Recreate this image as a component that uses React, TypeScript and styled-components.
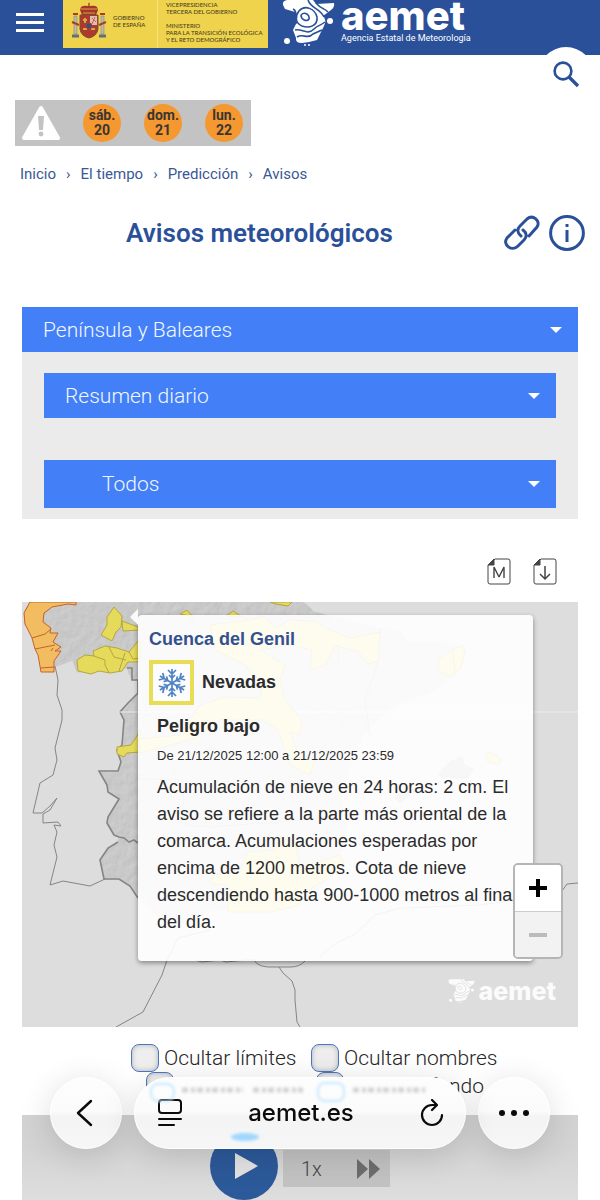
import React from "react";
import styled, { createGlobalStyle } from "styled-components";

const blue = "#2a5099";
const sans = '"Roboto", "Noto Sans", sans-serif';

const GlobalStyle = createGlobalStyle`
  *, *::before, *::after { box-sizing: border-box; }
  body { margin: 0; background: #fff; font-family: ${sans}; color: #222; }
  button, select, input { font: inherit; color: inherit; margin: 0; }
  button { border: 0; padding: 0; background: none; cursor: pointer; }
  a { color: inherit; text-decoration: none; }
  svg { display: block; }
`;

const Page = styled.div`
  position: relative;
  overflow: hidden;
`;

const Header = styled.header`
  position: relative;
  display: flex;
  align-items: flex-start;
  height: 55px;
  padding-left: 16px;
  background: ${blue};
`;

const MenuButton = styled.button`
  display: flex;
  flex-direction: column;
  gap: 5px;
  width: 28px;
  margin: 13px 19px 0 0;
`;

const MenuBar = styled.span`
  height: 3px;
  width: 100%;
  background: #fff;
`;

const Government = styled.a`
  display: flex;
  height: 48px;
  width: 205px;
  background: #efd34d;
  color: #4a4222;
  font: 500 6px/7px "Lato", sans-serif;
`;

const GovernmentName = styled.span`
  width: 44px;
  margin: 14px 0 0 6px;
`;

const Ministry = styled.span`
  flex: 1;
  padding: 1px 0 0 8px;
  border-left: 1px solid #f6e27c;
  white-space: nowrap;
`;

const MinistryLine = styled.span<{ $spaced?: boolean }>`
  display: block;
  margin-top: ${(p) => (p.$spaced ? 7 : 0)}px;
`;

const Brand = styled.a`
  display: flex;
  gap: 6px;
  margin-left: 14px;
  color: #fff;
`;

const BrandText = styled.span`
  display: flex;
  flex-direction: column;
`;

const Wordmark = styled.span<{ $size: number }>`
  font: 800 ${(p) => p.$size}px/${(p) => p.$size - 8}px "Inter", sans-serif;
`;

const Tagline = styled.span`
  font-size: 9px;
  line-height: 12px;
  white-space: nowrap;
`;

const SearchButton = styled.button`
  position: absolute;
  top: 47px;
  right: 6px;
  display: grid;
  place-items: center;
  width: 56px;
  height: 56px;
  border-radius: 50%;
  background: #fff;
`;

const Alerts = styled.section`
  display: flex;
  align-items: center;
  gap: 23px;
  width: 236px;
  height: 46px;
  margin: 45px 0 0 15px;
  padding-left: 7px;
  background: #c3c3c3;
`;

const AlertDay = styled.a`
  display: grid;
  place-content: center;
  width: 38px;
  height: 38px;
  border-radius: 50%;
  background: #f5982f;
  color: #3b3533;
  font-size: 14px;
  font-weight: 700;
  line-height: 15px;
  text-align: center;
`;

const Breadcrumb = styled.nav`
  display: flex;
  gap: 10px;
  margin: 18px 20px 0;
  color: #3a5895;
  font-size: 15px;
  line-height: 20px;
`;

const TitleRow = styled.div`
  display: flex;
  align-items: center;
  gap: 9px;
  height: 40px;
  margin: 29px 15px 0 24px;
`;

const Title = styled.h1`
  flex: 1;
  margin: 0;
  color: ${blue};
  font-size: 26px;
  font-weight: 600;
  line-height: 36px;
  text-align: center;
`;

const IconButton = styled.button`
  color: ${blue};
`;

const Filters = styled.section`
  margin: 54px 22px 0;
  padding-bottom: 11px;
  background: #ebebeb;
`;

const SubFilters = styled.div`
  display: flex;
  flex-direction: column;
  gap: 42px;
  padding: 21px 22px 0;
`;

const Picker = styled.label`
  position: relative;
  display: flex;
  align-items: center;
`;

const Select = styled.select<{ $height: number; $indent: number }>`
  appearance: none;
  width: 100%;
  height: ${(p) => p.$height}px;
  padding: 0 40px 0 ${(p) => p.$indent}px;
  border: 0;
  border-radius: 0;
  background: #437ff6;
  color: #f2f7ff;
  font-size: 21px;
  font-weight: 300;
`;

const Caret = styled.svg`
  position: absolute;
  right: 16px;
  pointer-events: none;
`;

const MapTools = styled.div`
  display: flex;
  justify-content: flex-end;
  gap: 22px;
  margin: 39px 43px 17px;
`;

const MapFrame = styled.section`
  position: relative;
  margin: 0 22px;
  background: #ddd;
`;

const MapDrawing = styled.svg`
  width: 100%;
  height: auto;
`;

const Popup = styled.article`
  position: absolute;
  top: 13px;
  left: 116px;
  right: 45px;
  height: 346px;
  padding: 10px 11px;
  border-radius: 4px;
  background: rgba(255, 255, 255, 0.9);
  box-shadow: 0 2px 5px rgba(0, 0, 0, 0.4);
  color: #2b2b2b;
  font-family: "Liberation Sans", sans-serif;

  &::before {
    content: "";
    position: absolute;
    top: -6px;
    left: -8px;
    border: 8px solid transparent;
    border-left-width: 0;
    border-right-color: #fafafa;
  }
`;

const PopupTitle = styled.h2`
  margin: 0;
  color: #34508f;
  font-size: 18px;
  line-height: 28px;
`;

const Phenomenon = styled.h3`
  display: flex;
  align-items: center;
  gap: 8px;
  margin: 7px 0 0;
  font-size: 18px;
`;

const PhenomenonIcon = styled.span`
  display: grid;
  place-items: center;
  width: 45px;
  height: 45px;
  border: 4px solid #e8dd55;
  background: #fdfdfd;
`;

const PopupBody = styled.div`
  padding: 8px 0 0 8px;
`;

const Severity = styled.h4`
  margin: 0;
  font-size: 18px;
  line-height: 27px;
`;

const Period = styled.p`
  margin: 5px 0 0;
  font-size: 13px;
  line-height: 22px;
`;

const Description = styled.p`
  margin: 7px -8px 0 0;
  font-size: 18px;
  line-height: 27px;
`;

const ZoomControl = styled.div`
  position: absolute;
  top: 261px;
  right: 15px;
  display: flex;
  flex-direction: column;
  border: 2px solid #b5b5b5;
  border-radius: 5px;
  overflow: hidden;
`;

const ZoomButton = styled.button`
  display: grid;
  place-items: center;
  width: 46px;
  height: 46px;
  background: #fff;
  color: #000;

  & + & { border-top: 1px solid #ccc; }
  &:disabled { background: #f2f2f2; color: #bbb; }
`;

const Watermark = styled.div`
  position: absolute;
  right: 22px;
  bottom: 24px;
  display: flex;
  align-items: center;
  gap: 4px;
  color: #fbfbfb;
`;

const Options = styled.div`
  display: flex;
  flex-direction: column;
  align-items: center;
  margin-top: 17px;
  padding-left: 30px;
`;

const OptionRow = styled.div`
  display: flex;
  gap: 12px;
  height: 28px;
`;

const Option = styled.label<{ $width: number }>`
  display: flex;
  align-items: center;
  gap: 5px;
  width: ${(p) => p.$width}px;
  color: #262626;
  font-size: 21px;
  font-weight: 300;
  line-height: 28px;
  white-space: nowrap;
`;

const OptionEnd = styled.span`
  flex: 1;
  text-align: right;
`;

const Check = styled.input`
  appearance: none;
  flex: none;
  width: 28px;
  height: 28px;
  border: 1px solid #4a76c4;
  border-radius: 8px;
  background: #eee;
  box-shadow: inset 0 0 5px rgba(0, 0, 0, 0.25);
`;

const Player = styled.section`
  display: flex;
  justify-content: center;
  align-items: flex-start;
  gap: 5px;
  height: 85px;
  margin: 15px 22px 0;
  background: linear-gradient(#d2d2d2, #d4d4d4 40%, #dedede);
  overflow: hidden;
`;

const PlayButton = styled.button`
  display: grid;
  place-items: center;
  width: 68px;
  height: 68px;
  margin-top: 17px;
  padding-left: 3px;
  border-radius: 50%;
  background: #2c5999;
`;

const Speed = styled.div`
  display: flex;
  align-items: center;
  justify-content: space-between;
  width: 107px;
  height: 37px;
  margin-top: 35px;
  padding: 0 10px 0 18px;
  background: #c2c2c2;
  color: #444;
  font-size: 20px;
  font-weight: 300;
`;

const BrowserBar = styled.nav`
  position: fixed;
  left: 0;
  right: 0;
  bottom: 51px;
  display: flex;
  justify-content: center;
  gap: 12px;
  color: #0b0b0b;
`;

const glass = `
  border: 1px solid #fff;
  background: linear-gradient(#fdfdfd, #fbfbfb 48%, #f4f4f4 54%, #f6f6f6);
  box-shadow: 0 6px 34px rgba(0, 0, 0, 0.14);
`;

const RoundButton = styled.button`
  display: grid;
  place-items: center;
  width: 72px;
  height: 72px;
  border-radius: 50%;
  ${glass}
`;

const AddressPill = styled.div`
  position: relative;
  display: flex;
  align-items: center;
  justify-content: space-between;
  width: 332px;
  height: 72px;
  padding: 0 21px 0 23px;
  border-radius: 36px;
  overflow: hidden;
  ${glass}
`;

const Reflection = styled.svg`
  position: absolute;
  top: 0;
  left: 0;
`;

const Address = styled.span`
  position: relative;
  font: 500 24px/30px "Inter", sans-serif;
`;

const LogoMark = ({ width, height, ground }: { width: number; height: number; ground: string }) => (
  <svg width={width} height={height} viewBox="0 0 53 46" fill="none" aria-hidden="true">
    <path fill="currentColor" d="M1 5Q0 1 5 0H31L34 4 52 3Q53 7 49 10L41 16Q45 20 42 26L38 34 35 40 27 42 20 43Q13 43 14 38L11 30 15 22 13 12 3 9Z" />
    <g stroke={ground} strokeWidth="1.6">
      <path d="M11 9C16 11 12 17 14 24M17 11C23 4 33 9 35 17 36 25 28 29 20 26 13 23 13 16 17 11Z" />
      <path d="M19 15C23 11 28 15 27 19 25 22 19 20 19 15M26 0C29 9 38 8 42 17" />
      <path d="M13 30C20 28 25 36 32 29 36 25 38 26 43 22M15 37C21 33 26 40 31 34L40 30M34 3C39 9 42 8 46 12" />
    </g>
    <circle cx="48" cy="21" r="3" fill="currentColor" />
    <circle cx="5" cy="41" r="3" fill="currentColor" />
    <circle cx="23" cy="45" r="1" fill="currentColor" />
    <circle cx="27" cy="45" r="1" fill="currentColor" />
  </svg>
);

const Shield = styled.svg`
  margin: 2px 0 0 8px;
`;

const CoatOfArms = () => (
  <Shield width="36" height="37" viewBox="0 0 36 37" aria-hidden="true">
    <path fill="#a6352c" d="M9 8L10 5Q13 3 17 4V1H19V4Q24 3 26 5L27 8 25 13H11Z" />
    <path stroke="#d7a83b" d="M10 7H26M12 11H24M18 0V4" />
    <path fill="#ad3a2e" stroke="#76502d" d="M9 13H27V27Q26 34 18 36 10 34 9 27Z" />
    <path fill="#dfbfb0" d="M19 14H26V23H19Z" />
    <path stroke="#c96262" d="M21 22L24 15M21 16L25 20" />
    <path stroke="#d7a83b" strokeWidth="2" d="M12 18H16M20 27H24M12 27H16M14 16V21" />
    <circle cx="18" cy="24" r="3" fill="#3d4f80" stroke="#ad3a2e" />
    <path fill="#b9bbb0" stroke="#777a73" strokeWidth=".5" d="M3 14H6V32H3ZM30 14H33V32H30Z" />
    <path stroke="#ad3a2e" strokeWidth="2" d="M1 20L8 23M28 23L35 20M2 12H7M29 12H34" />
    <path stroke="#626d7d" strokeWidth="3" d="M1 34H8M28 34H35" />
  </Shield>
);

const DropDown = ({ label, value, height, indent }: { label: string; value: string; height: number; indent: number }) => (
  <Picker>
    <Select aria-label={label} $height={height} $indent={indent} defaultValue={value}>
      <option>{value}</option>
    </Select>
    <Caret width="12" height="8" viewBox="0 0 12 8"><path fill="#fff" d="M0 1H12L6 7Z" /></Caret>
  </Picker>
);

const Snowflake = () => (
  <svg width="30" height="30" viewBox="-15 -15 30 30" fill="none" stroke="#4d83c4" strokeWidth="1.7" aria-hidden="true">
    {[0, 60, 120, 180, 240, 300].map((angle) => (
      <path key={angle} transform={`rotate(${angle})`} d="M0 0V-14M-4-13L0-9 4-13M-3-8L0-5 3-8" />
    ))}
  </svg>
);

const SpainMap = () => (
  <MapDrawing viewBox="22 602 556 425" role="img" aria-label="Mapa de avisos">
    <defs>
      <filter id="terrain" x="0" y="0" width="100%" height="100%">
        <feTurbulence type="fractalNoise" baseFrequency="0.12" numOctaves="3" seed="4" />
        <feDiffuseLighting surfaceScale="0.5" lightingColor="#d8d8d8" result="light">
          <feDistantLight azimuth="225" elevation="58" />
        </feDiffuseLighting>
        <feComposite in="light" in2="SourceGraphic" operator="in" />
      </filter>
    </defs>
    <path id="land" fill="#b2b2b2" filter="url(#terrain)" stroke="#8a8a8a" d="M30 602H303L309 607 314 612 345 620 378 628 400 631 408 643 440 642 466 650 461 667 436 690 390 708 362 736 350 768 341 793 344 820 348 838 326 875 310 895 290 903 245 911 210 910 177 930 160 919 146 903 138 895 130 886 119 879H104L100 860 108 848 118 842 119 837 114 835 107 823 108 817 119 799 108 792 107 785 99 772H118L121 762 117 750 122 745 124 720 120 712 128 703 138 693V680H132L127 668 77 672 73 660 57 666 45 660 39 636 25 625 24 612Z" />
    <g fill="none" stroke="#858585">
      <path d="M55 666L58 680 57 695 62 710V720L55 748 57 760 53 775 40 783 33 813 42 813 50 806 57 798 50 810 43 814V823L58 822 61 826 54 825 57 832 54 845 57 857 50 885 63 881 90 886 105 879" />
      <path strokeWidth="1.6" d="M127 668L132 668V680H138V693L128 703 120 712 124 720 122 745 117 750 121 762 118 771H99L107 785 108 792 119 799 108 817 107 823 114 835 119 837 124 838 129 842 134 840 138 843M118 842L108 848 100 860 104 879H119L130 886 138 898" />
      <path d="M116 1027L143 1012 162 975 167 960 178 938 210 930M195 960L202 962 220 960 226 962 246 960 254 960Q258 968 275 967L290 967Q300 967 305 961M279 967L283 973 292 981 295 990V1000L297 1022 300 1027M320 957L333 945 355 934 375 915 400 908 480 905 550 895 562 891 567 884 578 883" />
      <path stroke="#a1a1a1" d="M138 779L182 780 185 825 210 827 300 820 345 815M380 628L377 665 365 700 370 735M310 760L345 725" />
    </g>
    <path stroke="#ececec" d="M118 712H578" />
    <g fill="#e5da59" stroke="#b5a641">
      <path d="M114 607L122 616 121 627 116 632 112 641 101 635 107 625 107 617ZM122 621L138 627 140 630 123 631Z" />
      <path d="M78 671L77 660 85 655 94 656 93 651 105 646 117 648 129 652 140 639V662L128 662 122 671 110 673 99 671 91 674Z" />
      <path d="M117 747L131 745 137 736 140 729V752L127 753 124 757 117 754ZM180 614L187 610 193 617ZM226 616L233 611 242 617ZM270 602H292L288 606 276 604Z" />
      <path d="M210 625L250 620 265 616 275 628 290 620 315 621 325 628 350 638 380 632 378 661 368 664 358 651 335 646 325 665 310 670 312 650 290 645 260 650 285 665 280 680 285 700 302 720 300 735 290 732 300 758 315 760 310 775 290 765 278 730 262 720 220 720 196 738 160 748 140 753 139 739 180 735 200 705 225 697 260 698 262 682 245 665 215 650Z" />
      <path d="M453 650L462 645 465 652 461 668 450 677 438 670 439 658ZM485 754Q493 750 501 760L499 764 488 762ZM248 852L275 850 280 838 295 842 300 867 340 855 345 865 326 880 300 895 300 905 270 912 228 912 226 885 210 883 214 875 240 872Z" />
    </g>
    <path fill="none" stroke="#b5a641" d="M94 656L105 660 105 665 109 673M109 647L114 657 126 660M125 653L119 671M129 652L133 659 140 658M338 645L338 665M453 652L455 675" />
    <g fill="#f2bd61" stroke="#c5622c">
      <path d="M30 602H76L76 605 68 604 52 607 44 613 43 622 51 628 50 633 58 633 53 642 61 647 55 651 61 651 54 661 54 672 41 672 38 655 35 649 32 638 25 624 24 613Z" />
      <path d="M32 638L45 634 51 629M35 649L55 645M40 668L55 667M51 651L53 648" />
    </g>
    <path fill="#adadad" stroke="#999" d="M438 775L450 762 462 757 464 765 473 769 468 778 455 778ZM395 798L410 785 415 791 400 803Z" />
  </MapDrawing>
);

export default function App() {
  return (
    <Page>
      <GlobalStyle />
      <Header>
        <MenuButton aria-label="Menú"><MenuBar /><MenuBar /><MenuBar /></MenuButton>
        <Government href="#gobierno">
          <CoatOfArms />
          <GovernmentName>GOBIERNO<br />DE ESPAÑA</GovernmentName>
          <Ministry>
            <MinistryLine>VICEPRESIDENCIA</MinistryLine>
            <MinistryLine>TERCERA DEL GOBIERNO</MinistryLine>
            <MinistryLine $spaced>MINISTERIO</MinistryLine>
            <MinistryLine>PARA LA TRANSICIÓN ECOLÓGICA</MinistryLine>
            <MinistryLine>Y EL RETO DEMOGRÁFICO</MinistryLine>
          </Ministry>
        </Government>
        <Brand href="#inicio">
          <LogoMark width={53} height={46} ground={blue} />
          <BrandText>
            <Wordmark $size={40}>aemet</Wordmark>
            <Tagline>Agencia Estatal de Meteorología</Tagline>
          </BrandText>
        </Brand>
        <SearchButton aria-label="Buscar">
          <svg width="28" height="28" viewBox="0 0 28 28" fill="none" stroke={blue} strokeWidth="2.6">
            <circle cx="11" cy="10" r="8.4" /><path strokeWidth="3.4" d="M17 16L26 25" />
          </svg>
        </SearchButton>
      </Header>

      <Alerts>
        <svg width="38" height="36" viewBox="0 0 38 36" aria-label="Avisos">
          <path fill="#fff" stroke="#fff" strokeWidth="4" strokeLinejoin="round" d="M19 3L36 33H2Z" />
          <path fill="#c3c3c3" d="M16 11H22L21 25H17Z" /><circle cx="19" cy="29" r="2.4" fill="#c3c3c3" />
        </svg>
        <AlertDay href="#20">sáb.<br />20</AlertDay>
        <AlertDay href="#21">dom.<br />21</AlertDay>
        <AlertDay href="#22">lun.<br />22</AlertDay>
      </Alerts>

      <Breadcrumb aria-label="Ruta">
        <a href="#inicio">Inicio</a><span>›</span>
        <a href="#tiempo">El tiempo</a><span>›</span>
        <a href="#prediccion">Predicción</a><span>›</span>
        <a href="#avisos">Avisos</a>
      </Breadcrumb>

      <main>
        <TitleRow>
          <Title>Avisos meteorológicos</Title>
          <IconButton aria-label="Enlace">
            <svg width="36" height="36" viewBox="0 0 36 36" fill="none" stroke="currentColor" strokeWidth="3" strokeLinecap="round">
              <path d="M17 21C13 18 13 14 16 11L23 4C29-1 37 6 33 12L25 21M19 15C23 18 23 22 20 25L14 31C8 37-2 30 3 23L11 15" />
            </svg>
          </IconButton>
          <IconButton aria-label="Información">
            <svg width="36" height="36" viewBox="0 0 36 36" fill="none" stroke="currentColor" strokeWidth="3">
              <circle cx="18" cy="18" r="16.4" /><path d="M18 15V27M18 9V12" />
            </svg>
          </IconButton>
        </TitleRow>

        <Filters>
          <DropDown label="Zona" value="Península y Baleares" height={45} indent={21} />
          <SubFilters>
            <DropDown label="Periodo" value="Resumen diario" height={45} indent={21} />
            <DropDown label="Fenómeno" value="Todos" height={48} indent={58} />
          </SubFilters>
        </Filters>

        <MapTools>
          <button aria-label="Mapa">
            <svg width="24" height="27" viewBox="0 0 24 27" fill="none" stroke="#444">
              <path d="M8 1H21Q23 1 23 3V24Q23 26 21 26H3Q1 26 1 24V7Z" /><path fill="#444" d="M1 7L7 1V7Z" /><path strokeWidth="1.4" strokeLinejoin="bevel" d="M7 20V9L12 19 17 9V20" />
            </svg>
          </button>
          <button aria-label="Descargar">
            <svg width="24" height="27" viewBox="0 0 24 27" fill="none" stroke="#444">
              <path d="M8 1H21Q23 1 23 3V24Q23 26 21 26H3Q1 26 1 24V7Z" /><path fill="#444" d="M1 7L7 1V7Z" /><path strokeWidth="1.5" d="M12 8V21M7 16L12 21 17 16" />
            </svg>
          </button>
        </MapTools>

        <MapFrame>
          <SpainMap />
          <Popup>
            <PopupTitle>Cuenca del Genil</PopupTitle>
            <Phenomenon><PhenomenonIcon><Snowflake /></PhenomenonIcon>Nevadas</Phenomenon>
            <PopupBody>
              <Severity>Peligro bajo</Severity>
              <Period>De 21/12/2025 12:00 a 21/12/2025 23:59</Period>
              <Description>
                Acumulación de nieve en 24 horas: 2 cm. El aviso se refiere a la parte más oriental de la comarca.
                Acumulaciones esperadas por encima de 1200 metros. Cota de nieve descendiendo hasta 900-1000 metros al
                final del día.
              </Description>
            </PopupBody>
          </Popup>
          <ZoomControl>
            <ZoomButton aria-label="Acercar">
              <svg width="18" height="18" stroke="currentColor" strokeWidth="4"><path d="M0 9H18M9 0V18" /></svg>
            </ZoomButton>
            <ZoomButton aria-label="Alejar" disabled>
              <svg width="18" height="18" stroke="currentColor" strokeWidth="4"><path d="M0 9H18" /></svg>
            </ZoomButton>
          </ZoomControl>
          <Watermark>
            <LogoMark width={27} height={24} ground="#ddd" />
            <Wordmark $size={25}>aemet</Wordmark>
          </Watermark>
        </MapFrame>

        <Options>
          <OptionRow>
            <Option $width={168}><Check type="checkbox" />Ocultar límites</Option>
            <Option $width={188}><Check type="checkbox" />Ocultar nombres</Option>
          </OptionRow>
          <OptionRow>
            <Option $width={158}><Check type="checkbox" aria-label="Capa" /></Option>
            <Option $width={168}><Check type="checkbox" /><OptionEnd>fondo</OptionEnd></Option>
          </OptionRow>
        </Options>

        <Player>
          <PlayButton aria-label="Reproducir">
            <svg width="24" height="28" viewBox="0 0 24 28"><path fill="#e2e2e2" d="M1 1L24 14 1 27Z" /></svg>
          </PlayButton>
          <Speed>
            <span>1x</span>
            <button aria-label="Más rápido">
              <svg width="24" height="22" viewBox="0 0 24 22"><path fill="#6d6d6d" d="M1 1L12 11 1 21ZM13 1L24 11 13 21Z" /></svg>
            </button>
          </Speed>
        </Player>
      </main>

      <BrowserBar aria-label="Navegador">
        <RoundButton aria-label="Atrás">
          <svg width="20" height="28" viewBox="0 0 20 28" fill="none" stroke="currentColor" strokeWidth="2.4" strokeLinecap="round" strokeLinejoin="round"><path d="M15 2L2 14 15 26" /></svg>
        </RoundButton>
        <AddressPill>
          <Reflection width="332" height="72" fill="none" aria-hidden="true">
            <defs>
              <filter id="soft"><feGaussianBlur stdDeviation="1.6" /></filter>
            </defs>
            <g filter="url(#soft)">
              <rect x="16" y="6" width="23" height="17" rx="7" stroke="#c6e8ff" strokeWidth="2" />
              <rect x="183" y="5" width="26" height="18" rx="7" stroke="#c6e8ff" strokeWidth="2" />
              <path stroke="#d2d2d2" strokeWidth="5" strokeDasharray="6 3 4 2" d="M47 12H108M118 12H168M218 12H290" />
              <ellipse cx="110" cy="59" rx="14" ry="4" fill="#9fd7ff" />
            </g>
          </Reflection>
          <button aria-label="Formato de página">
            <svg width="24" height="28" viewBox="0 0 24 28" fill="none" stroke="currentColor" strokeWidth="2" strokeLinecap="round">
              <rect x="1" y="1" width="22" height="13" rx="3" /><path d="M1 20H23M1 26H16" />
            </svg>
          </button>
          <Address>aemet.es</Address>
          <button aria-label="Recargar">
            <svg width="24" height="28" viewBox="0 0 24 28" fill="none" stroke="currentColor" strokeWidth="2.2" strokeLinecap="round" strokeLinejoin="round">
              <path d="M16 6H12A10 10 0 1 0 22 16M12 1L17 6 12 11" />
            </svg>
          </button>
        </AddressPill>
        <RoundButton aria-label="Más opciones">
          <svg width="30" height="6" fill="currentColor"><circle cx="3" cy="3" r="3" /><circle cx="15" cy="3" r="3" /><circle cx="27" cy="3" r="3" /></svg>
        </RoundButton>
      </BrowserBar>
    </Page>
  );
}
